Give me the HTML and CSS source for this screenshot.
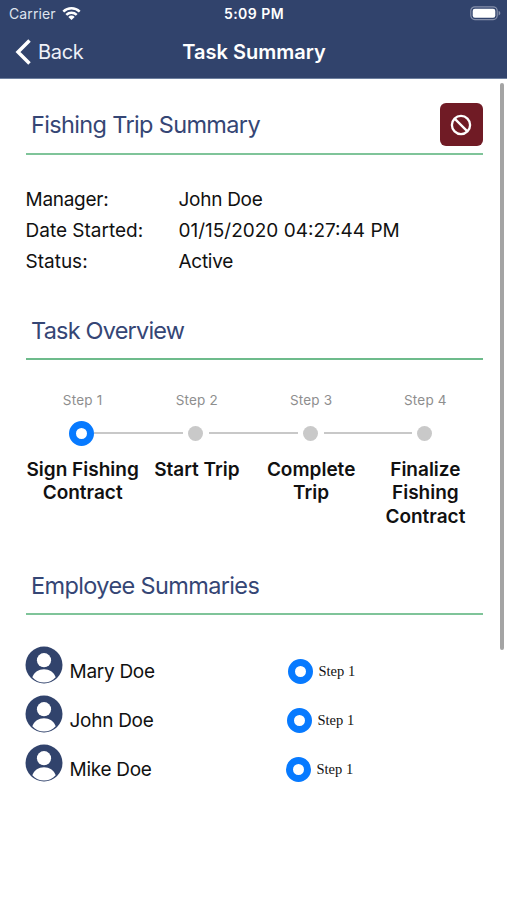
FILE: index.html
```html
<!DOCTYPE html>
<html lang="en">
<head>
<meta charset="utf-8">
<title>Task Summary</title>
<link rel="stylesheet" href="styles.css">
</head>
<body>
<svg class="defs" width="0" height="0" aria-hidden="true">
  <symbol id="avatar" viewBox="0 0 38 38">
    <circle cx="19" cy="19" r="18.500" fill="#31436c"/>
    <circle cx="19" cy="14.200" r="7.100" fill="#fff"/>
    <path d="M7.300 31.200C9.200 26 13.600 23.200 19 23.200s9.800 2.800 11.700 8C27.700 34.600 23.600 36.500 19 36.500S10.300 34.600 7.300 31.200Z" fill="#fff"/>
  </symbol>
</svg>
<header class="header">
  <div class="status">
    <span class="carrier">Carrier</span>
    <svg class="wifi" width="19" height="15" viewBox="0 0 19 15">
      <g fill="none" stroke="#fff" stroke-width="2.500">
        <path d="M1.300 5.600a11.800 11.800 0 0 1 16.400 0"/>
        <path d="M4.300 8.900a7.500 7.500 0 0 1 10.400 0"/>
      </g>
      <path d="M9.500 14 6.300 10.900a4.600 4.600 0 0 1 6.400 0Z" fill="#fff"/>
    </svg>
    <span class="clock">5:09 PM</span>
    <svg class="battery" width="31" height="15" viewBox="0 0 31 15">
      <rect x=".8" y=".8" width="26.400" height="12.800" rx="4" fill="none" stroke="#8690ab" stroke-width="1.200"/>
      <rect x="2.700" y="2.700" width="22.600" height="9" rx="2.200" fill="#fff"/>
      <path d="M28.600 5v4.400c1.100-.4 1.700-1.200 1.700-2.200s-.6-1.800-1.700-2.200Z" fill="#8690ab"/>
    </svg>
  </div>
  <div class="nav">
    <div class="back">
      <svg width="17" height="28" viewBox="0 0 17 28"><path d="M14.500 2.500 3 14l11.500 11.500" fill="none" stroke="#fff" stroke-width="3.500"/></svg>
      <span class="back-text">Back</span>
    </div>
    <h1 class="title">Task Summary</h1>
  </div>
</header>
<main class="content">
  <section>
    <div class="section-head first">
      <h2 class="h-trip">Fishing Trip Summary</h2>
      <button class="cancel" aria-label="Cancel">
        <svg width="22" height="22" viewBox="0 0 22 22" fill="none" stroke="#fff" stroke-width="2.300"><circle cx="11" cy="11" r="9.100"/><path d="M4.600 4.600 17.400 17.400"/></svg>
      </button>
    </div>
    <dl class="details">
      <dt class="tight">Manager:</dt><dd class="tight">John Doe</dd>
      <dt>Date Started:</dt><dd>01/15/2020 04:27:44 PM</dd>
      <dt>Status:</dt><dd class="tight">Active</dd>
    </dl>
  </section>
  <section>
    <div class="section-head second"><h2 class="h-task">Task Overview</h2></div>
    <ol class="steps">
      <li class="step"><span class="label">Step 1</span><div class="track"><i></i><b class="ring"></b><i class="line near"></i></div><strong>Sign Fishing<br>Contract</strong></li>
      <li class="step"><span class="label">Step 2</span><div class="track"><i class="line left"></i><b class="dot"></b><i class="line right"></i></div><strong>Start Trip</strong></li>
      <li class="step"><span class="label">Step 3</span><div class="track"><i class="line left"></i><b class="dot"></b><i class="line right"></i></div><strong>Complete<br>Trip</strong></li>
      <li class="step"><span class="label">Step 4</span><div class="track"><i class="line left"></i><b class="dot"></b><i></i></div><strong>Finalize<br>Fishing<br>Contract</strong></li>
    </ol>
  </section>
  <section>
    <div class="section-head third"><h2 class="h-emp">Employee Summaries</h2></div>
    <ul class="people">
      <li><svg class="avatar"><use href="#avatar"/></svg><span class="name">Mary Doe</span><div class="progress p1"><b class="ring"></b><span>Step 1</span></div></li>
      <li><svg class="avatar"><use href="#avatar"/></svg><span class="name">John Doe</span><div class="progress p2"><b class="ring"></b><span>Step 1</span></div></li>
      <li><svg class="avatar"><use href="#avatar"/></svg><span class="name">Mike Doe</span><div class="progress p3"><b class="ring"></b><span>Step 1</span></div></li>
    </ul>
  </section>
</main>
<div class="scrollbar"></div>
</body>
</html>
```
FILE: styles.css
```css
* { box-sizing: border-box; margin: 0; padding: 0; }
body { width: 507px; height: 900px; overflow: hidden; background: #fff; color: #111; font-family: Inter, "Liberation Sans", sans-serif; }
.defs { position: absolute; }
ul, ol { list-style: none; }
.header { height: 79px; background: #31436c; color: #fff; border-bottom: 1px solid #6d7f9e; }
.status { display: grid; grid-template-columns: 61.500px 120px 145px 1fr; height: 27px; align-items: center; font-size: 14px; line-height: 27px; }
.carrier { padding-left: 9px; letter-spacing: .1px; color: #dfe3ee; }
.wifi { margin-top: -1px; }
.clock { text-align: center; font-size: 14px; font-weight: 600; letter-spacing: .45px; }
.battery { justify-self: end; margin-right: 6px; }
.nav { display: grid; grid-template-columns: 154px 200px 1fr; height: 51px; align-items: center; }
.back { display: flex; align-items: center; gap: 6px; padding: 0 0 1px 15px; font-size: 20px; letter-spacing: -.3px; color: #eef1f8; }
.title { font-size: 20px; line-height: 24px; font-weight: 600; text-align: center; padding-bottom: 1px; white-space: nowrap; }
.content { padding: 0 24.500px 0 25.500px; }
.section-head { display: flex; justify-content: space-between; align-items: center; border-bottom: 2px solid #7fc499; padding-left: 5.500px; }
.section-head h2 { font-size: 23.500px; line-height: 28px; font-weight: 400; color: #354675; white-space: nowrap; }
.section-head .h-trip { letter-spacing: -.65px; padding-top: 1px; }
.section-head .h-task { letter-spacing: -.8px; }
.section-head .h-emp { letter-spacing: -.63px; }
.first { height: 76px; padding-top: 17px; }
.second { height: 45px; padding-bottom: 11px; border-color: #6dbb8b; }
.third { height: 44px; padding-bottom: 12px; }
.cancel { display: grid; place-items: center; width: 43px; height: 43px; border: 0; border-radius: 6px; background: #701b25; }
.details { display: grid; grid-template-columns: 153px 1fr; grid-auto-rows: 31px; padding-top: 29px; height: 160px; font-size: 19px; line-height: 31px; white-space: nowrap; }
.details dt, .details dd { justify-self: start; }
.details .tight { letter-spacing: -.28px; }
.steps { display: grid; grid-template-columns: repeat(4, 1fr); height: 211px; padding-top: 31px; text-align: center; }
.step { display: flex; flex-direction: column; align-items: center; white-space: nowrap; }
.label { font-size: 13.500px; line-height: 18px; letter-spacing: .2px; color: #8e8e8e; }
.track { display: grid; grid-template-columns: 1fr auto 1fr; align-items: center; width: 100%; height: 48px; padding-right: 2px; margin-bottom: 1px; }
.line { height: 2px; background: #c8c8c8; }
.left { margin-right: 5px; }
.right { margin: 0 -2px 0 6px; }
.near { margin-right: -2px; }
.ring { display: block; width: 25px; height: 25px; border-radius: 50%; border: 7.500px solid #077aff; background: #fff; }
.dot { display: block; width: 15px; height: 15px; border-radius: 50%; background: #c9c9c9; }
.step strong { font-size: 19px; line-height: 23.300px; font-weight: 600; }
.people { padding-top: 27px; }
.people li { display: grid; grid-template-columns: 44px 218px 1fr; height: 49px; align-items: center; }
.avatar { width: 38px; height: 38px; margin: 0 0 4px -1px; }
.name { font-size: 19px; line-height: 24px; letter-spacing: -.28px; padding-top: 10px; justify-self: start; }
.progress { display: flex; align-items: center; gap: 6px; padding-top: 10px; font: 14.500px "Liberation Serif", serif; }
.p2 { margin-left: -1px; }
.p3 { margin-left: -2px; }
.scrollbar { position: absolute; left: 499.500px; top: 83px; width: 4px; height: 567px; border-radius: 2px; background: #a4a4a4; }
```
